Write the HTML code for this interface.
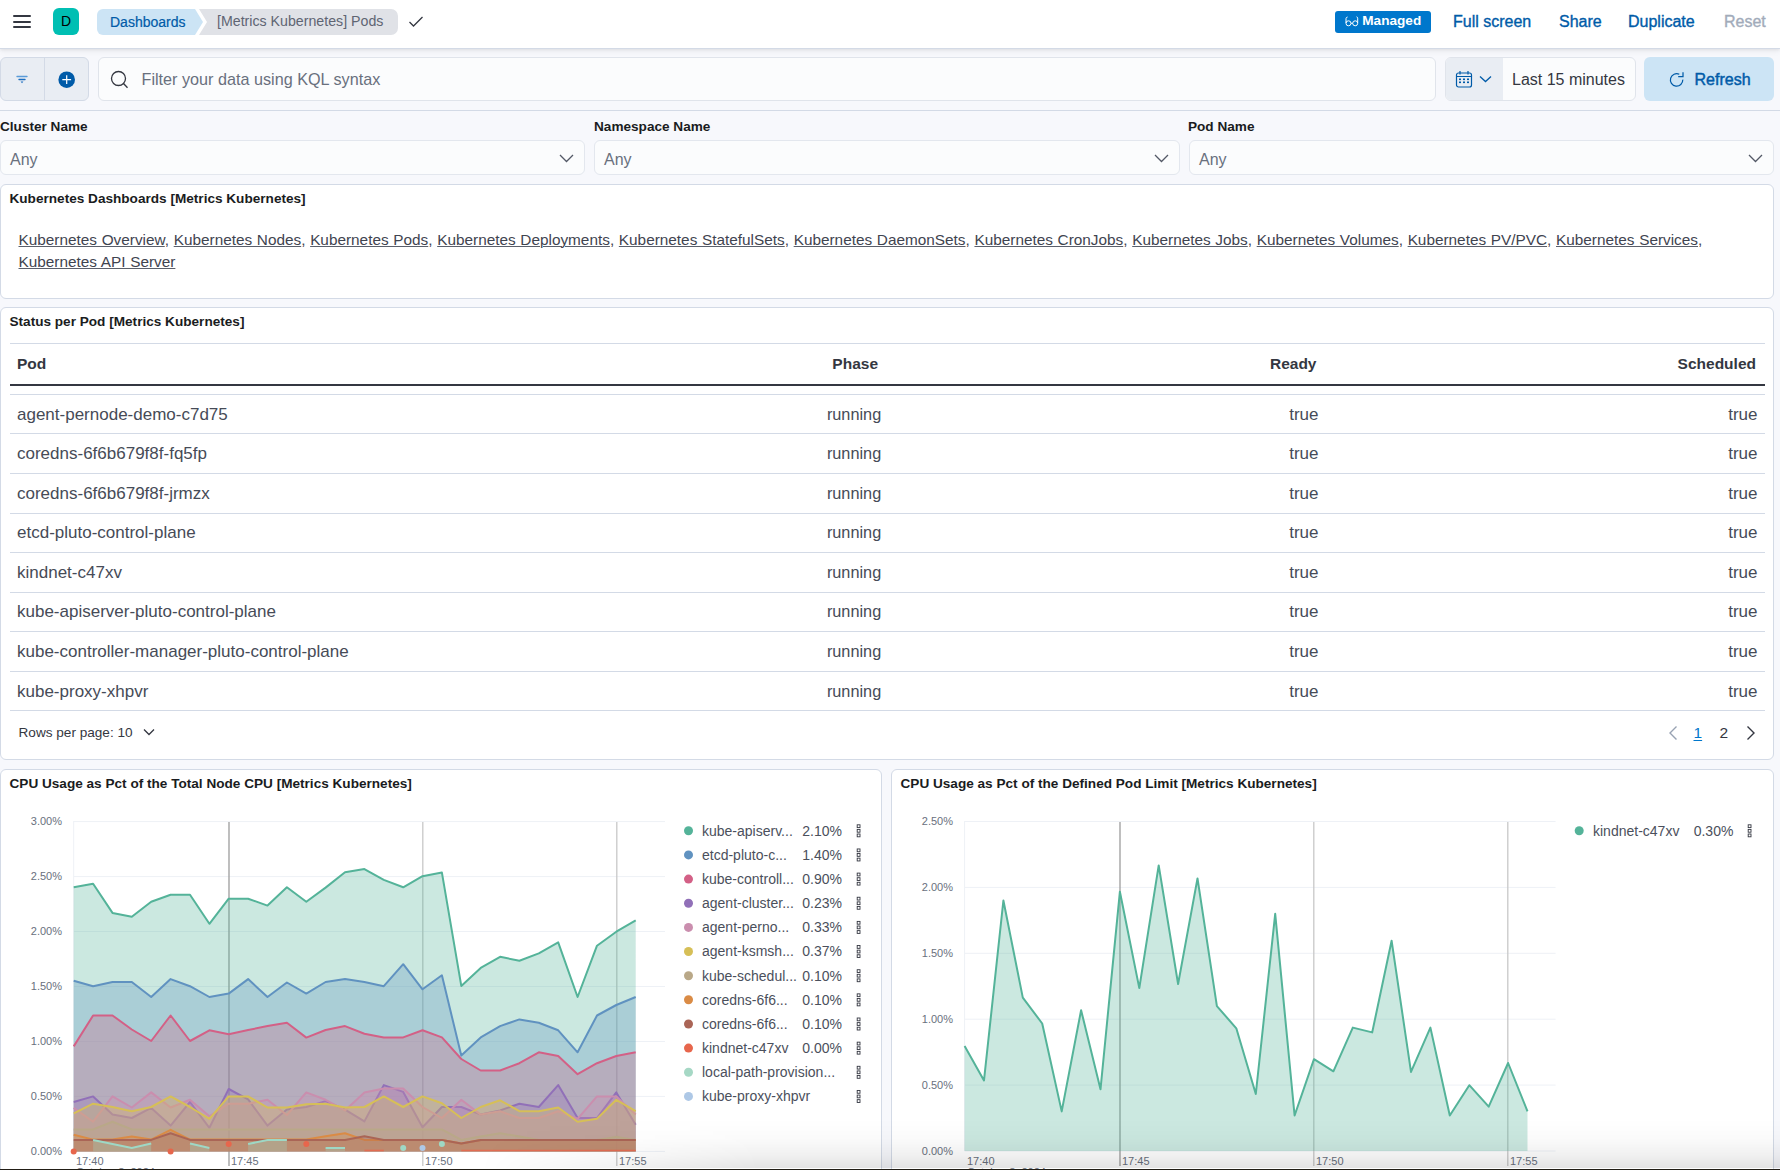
<!DOCTYPE html>
<html><head><meta charset="utf-8">
<style>
*{box-sizing:border-box;margin:0;padding:0}
html,body{width:1780px;height:1170px;overflow:hidden;background:#F7F8FC;font-family:"Liberation Sans",sans-serif;color:#343741}
.abs{position:absolute}
#hdr{position:absolute;left:0;top:0;width:1780px;height:49px;background:#fff;border-bottom:1px solid #D3DAE6;box-shadow:0 1px 3px rgba(0,0,0,.08),0 3px 6px rgba(0,0,0,.04)}
.bar{position:absolute;left:13px;width:18px;height:2.4px;border-radius:1.2px;background:#343741}
.t{position:absolute;white-space:nowrap;line-height:1}
.hlink{position:absolute;top:13.5px;font-size:16px;color:#005BA8;white-space:nowrap;line-height:1;-webkit-text-stroke:0.35px #005BA8}
.panel{position:absolute;background:#fff;border:1px solid #D3DAE6;border-radius:6px;overflow:hidden}
.ptitle{position:absolute;left:9.5px;font-size:13.6px;font-weight:700;color:#1A1C21;white-space:nowrap;line-height:1}
.sel{position:absolute;top:140px;height:35px;background:#FBFCFD;border:1px solid #E3E7EE;border-radius:6px}
.lbl{position:absolute;top:120px;font-size:13.6px;font-weight:700;color:#1A1C21;line-height:1;white-space:nowrap}
.any{position:absolute;left:9px;top:11px;font-size:16px;color:#69707D;line-height:1}
.chev{position:absolute;top:13px;right:10px}
.links{position:absolute;left:18.5px;top:228.6px;width:1740px;font-size:15.35px;line-height:22px;color:#3F4450;word-spacing:0.4px}
.links span{text-decoration:underline;text-decoration-thickness:1px;text-underline-offset:1px;text-decoration-color:#5A5F6B}
.row{position:absolute;left:10px;width:1755px;height:1px;background:#D3DAE6}
.cell{position:absolute;font-size:17px;color:#464B57;white-space:nowrap;line-height:1}
.hcell{position:absolute;top:356px;font-size:15.5px;font-weight:700;color:#343741;white-space:nowrap;line-height:1}
</style></head><body>

<!-- HEADER -->
<div id="hdr">
  <div class="bar" style="top:15px"></div>
  <div class="bar" style="top:20.6px"></div>
  <div class="bar" style="top:26.1px"></div>
  <div class="abs" style="left:53px;top:8px;width:26px;height:27px;border-radius:6px;background:#00BFB3;color:#000;font-size:14px;line-height:27px;text-align:center">D</div>
  <svg class="abs" style="left:97px;top:9px" width="302" height="26" viewBox="0 0 302 26">
    <path d="M6 0H98L106 13L98 26H6A6 6 0 0 1 0 20V6A6 6 0 0 1 6 0Z" fill="#CCE4F5"/>
    <path d="M102 0H294A7 7 0 0 1 301 7V19A7 7 0 0 1 294 26H102L110 13Z" fill="#E0E2E7"/>
  </svg>
  <div class="t" style="left:110px;top:14.5px;font-size:14px;color:#005BA8;-webkit-text-stroke:0.2px #005BA8">Dashboards</div>
  <div class="t" style="left:217px;top:14.2px;font-size:14.2px;color:#5F6573">[Metrics Kubernetes] Pods</div>
  <svg class="abs" style="left:408px;top:15px" width="16" height="13" viewBox="0 0 16 13"><path d="M1.5 7L5.5 11L14.5 2" fill="none" stroke="#343741" stroke-width="1.3"/></svg>

  <div class="abs" style="left:1335px;top:11px;width:96px;height:22px;border-radius:3px;background:#0077CC"></div>
  <svg class="abs" style="left:1344.5px;top:15.5px" width="14" height="11" viewBox="0 0 14 11"><g fill="none" stroke="#fff" stroke-width="1"><circle cx="3.5" cy="7.3" r="2.5"/><circle cx="10.2" cy="7.3" r="2.5"/><path d="M6 7.3H7.7M1 7V2.6Q1 1.3 2.6 1M12.7 7V2.2Q12.7 1.1 11.5 0.8"/></g></svg>
  <div class="t" style="left:1362.3px;top:14px;font-size:13.6px;font-weight:700;color:#fff">Managed</div>
  <div class="hlink" style="left:1453px">Full screen</div>
  <div class="hlink" style="left:1559px">Share</div>
  <div class="hlink" style="left:1628px">Duplicate</div>
  <div class="hlink" style="left:1724px;color:#A2ABBA;-webkit-text-stroke:0.35px #A2ABBA">Reset</div>
</div>

<!-- FILTER BAR -->
<div class="abs" style="left:0;top:57px;width:89px;height:44px;background:#E9EDF3;border:1px solid #D3DAE6;border-radius:6px"></div>
<div class="abs" style="left:44px;top:58px;width:1px;height:42px;background:#D3DAE6"></div>
<svg class="abs" style="left:15px;top:74px" width="14" height="12" viewBox="0 0 14 12"><g stroke-width="1.4" stroke-linecap="round"><path d="M2 2.5H12" stroke="#5A9BD8"/><path d="M4 5.5H10" stroke="#1B6DC0"/></g><path d="M5.6 7.6H8.4L7 9.2Z" fill="#1B6DC0"/></svg>
<svg class="abs" style="left:57.5px;top:70.5px" width="18" height="18" viewBox="0 0 18 18"><circle cx="8.7" cy="8.7" r="8.3" fill="#005BA8"/><path d="M8.7 4.3V13.1M4.3 8.7H13.1" stroke="#fff" stroke-width="1.2"/></svg>

<div class="abs" style="left:98px;top:57px;width:1338px;height:44px;background:#FBFCFD;border:1px solid #E0E4EB;border-radius:6px"></div>
<svg class="abs" style="left:110px;top:70px" width="20" height="20" viewBox="0 0 20 20"><g fill="none" stroke="#343741" stroke-width="1.3"><circle cx="8.5" cy="8.5" r="7"/><path d="M13.5 13.5L17.5 17.8"/></g></svg>
<div class="t" style="left:141.5px;top:71px;font-size:16.2px;color:#69707D">Filter your data using KQL syntax</div>

<div class="abs" style="left:1445px;top:57px;width:191px;height:44px;background:#FBFCFD;border:1px solid #E0E4EB;border-radius:6px;overflow:hidden"><div style="position:absolute;left:0;top:0;width:57px;height:44px;background:#E9EDF3"></div></div>
<svg class="abs" style="left:1455px;top:70px" width="18" height="18" viewBox="0 0 18 18"><g fill="none" stroke="#005BA8" stroke-width="1.2"><rect x="1.5" y="3" width="15" height="14" rx="2"/><path d="M1.5 6.5H16.5M5 1V4.5M13 1V4.5"/></g><g fill="#005BA8"><rect x="4" y="8.5" width="2" height="1.6"/><rect x="8" y="8.5" width="2" height="1.6"/><rect x="12" y="8.5" width="2" height="1.6"/><rect x="4" y="11.5" width="2" height="1.6"/><rect x="8" y="11.5" width="2" height="1.6"/><rect x="12" y="11.5" width="2" height="1.6"/></g></svg>
<svg class="abs" style="left:1479px;top:75px" width="13" height="8" viewBox="0 0 13 8"><path d="M1 1.5L6.5 6.5L12 1.5" fill="none" stroke="#005BA8" stroke-width="1.3"/></svg>
<div class="t" style="left:1512px;top:72px;font-size:16px;color:#343741">Last 15 minutes</div>

<div class="abs" style="left:1644px;top:57px;width:130px;height:44px;background:#CCE4F5;border-radius:6px"></div>
<svg class="abs" style="left:1668px;top:70px" width="18" height="18" viewBox="0 0 18 18"><g fill="none" stroke="#005BA8" stroke-width="1.25"><path d="M11.3 4.3A6.2 6.2 0 1 0 14.8 9.6"/><path d="M15 2.2V6.5H10.2"/></g></svg>
<div class="t" style="left:1694.5px;top:71.6px;font-size:16px;color:#005BA8;-webkit-text-stroke:0.45px #005BA8">Refresh</div>

<div class="abs" style="left:0;top:110px;width:1780px;height:1px;background:#D3DAE6"></div>

<!-- CONTROLS -->
<div class="lbl" style="left:0">Cluster Name</div>
<div class="lbl" style="left:594px">Namespace Name</div>
<div class="lbl" style="left:1188px">Pod Name</div>
<div class="sel" style="left:0;width:585px"><div class="any">Any</div><svg class="chev" width="15" height="9" viewBox="0 0 15 9"><path d="M1 1L7.5 7.5L14 1" fill="none" stroke="#535966" stroke-width="1.3"/></svg></div>
<div class="sel" style="left:594px;width:586px"><div class="any">Any</div><svg class="chev" width="15" height="9" viewBox="0 0 15 9"><path d="M1 1L7.5 7.5L14 1" fill="none" stroke="#535966" stroke-width="1.3"/></svg></div>
<div class="sel" style="left:1189px;width:585px"><div class="any">Any</div><svg class="chev" width="15" height="9" viewBox="0 0 15 9"><path d="M1 1L7.5 7.5L14 1" fill="none" stroke="#535966" stroke-width="1.3"/></svg></div>

<!-- PANEL 1 -->
<div class="panel" style="left:0;top:184px;width:1774px;height:115px"></div>
<div class="ptitle" style="top:191.5px">Kubernetes Dashboards [Metrics Kubernetes]</div>
<div class="links"><span>Kubernetes Overview</span>, <span>Kubernetes Nodes</span>, <span>Kubernetes Pods</span>, <span>Kubernetes Deployments</span>, <span>Kubernetes StatefulSets</span>, <span>Kubernetes DaemonSets</span>, <span>Kubernetes CronJobs</span>, <span>Kubernetes Jobs</span>, <span>Kubernetes Volumes</span>, <span>Kubernetes PV/PVC</span>, <span>Kubernetes Services</span>,<br><span>Kubernetes API Server</span></div>

<!-- PANEL 2 -->
<div class="panel" style="left:0;top:307px;width:1774px;height:453px"></div>
<div class="ptitle" style="top:314.7px">Status per Pod [Metrics Kubernetes]</div>
<div class="row" style="top:343px"></div>
<div class="hcell" style="left:17px">Pod</div>
<div class="hcell" style="right:902px">Phase</div>
<div class="hcell" style="right:463.5px">Ready</div>
<div class="hcell" style="right:24px">Scheduled</div>
<div class="abs" style="left:10px;top:384px;width:1755px;height:2px;background:#343741"></div>
<div class="row" style="top:394.1px"></div>
<div class="row" style="top:433.0px"></div>
<div class="row" style="top:473.1px"></div>
<div class="row" style="top:512.7px"></div>
<div class="row" style="top:551.8px"></div>
<div class="row" style="top:591.9px"></div>
<div class="row" style="top:630.8px"></div>
<div class="row" style="top:671.0px"></div>
<div class="row" style="top:709.9px"></div>
<div class="cell" style="left:17px;top:405.66px">agent-pernode-demo-c7d75</div>
<div class="cell" style="right:898.8px;font-size:16.3px;top:405.66px">running</div>
<div class="cell" style="right:461.5px;top:405.66px">true</div>
<div class="cell" style="right:22.5px;top:405.66px">true</div>
<div class="cell" style="left:17px;top:445.16px">coredns-6f6b679f8f-fq5fp</div>
<div class="cell" style="right:898.8px;font-size:16.3px;top:445.16px">running</div>
<div class="cell" style="right:461.5px;top:445.16px">true</div>
<div class="cell" style="right:22.5px;top:445.16px">true</div>
<div class="cell" style="left:17px;top:485.01px">coredns-6f6b679f8f-jrmzx</div>
<div class="cell" style="right:898.8px;font-size:16.3px;top:485.01px">running</div>
<div class="cell" style="right:461.5px;top:485.01px">true</div>
<div class="cell" style="right:22.5px;top:485.01px">true</div>
<div class="cell" style="left:17px;top:524.36px">etcd-pluto-control-plane</div>
<div class="cell" style="right:898.8px;font-size:16.3px;top:524.36px">running</div>
<div class="cell" style="right:461.5px;top:524.36px">true</div>
<div class="cell" style="right:22.5px;top:524.36px">true</div>
<div class="cell" style="left:17px;top:563.96px">kindnet-c47xv</div>
<div class="cell" style="right:898.8px;font-size:16.3px;top:563.96px">running</div>
<div class="cell" style="right:461.5px;top:563.96px">true</div>
<div class="cell" style="right:22.5px;top:563.96px">true</div>
<div class="cell" style="left:17px;top:603.46px">kube-apiserver-pluto-control-plane</div>
<div class="cell" style="right:898.8px;font-size:16.3px;top:603.46px">running</div>
<div class="cell" style="right:461.5px;top:603.46px">true</div>
<div class="cell" style="right:22.5px;top:603.46px">true</div>
<div class="cell" style="left:17px;top:643.01px">kube-controller-manager-pluto-control-plane</div>
<div class="cell" style="right:898.8px;font-size:16.3px;top:643.01px">running</div>
<div class="cell" style="right:461.5px;top:643.01px">true</div>
<div class="cell" style="right:22.5px;top:643.01px">true</div>
<div class="cell" style="left:17px;top:682.56px">kube-proxy-xhpvr</div>
<div class="cell" style="right:898.8px;font-size:16.3px;top:682.56px">running</div>
<div class="cell" style="right:461.5px;top:682.56px">true</div>
<div class="cell" style="right:22.5px;top:682.56px">true</div>
<div class="t" style="left:18.5px;top:725.7px;font-size:13.6px;color:#343741">Rows per page: 10</div>
<svg class="abs" style="left:143px;top:728px" width="12" height="8" viewBox="0 0 12 8"><path d="M1 1.5L6 6.5L11 1.5" fill="none" stroke="#343741" stroke-width="1.3"/></svg>
<svg class="abs" style="left:1667px;top:725px" width="12" height="16" viewBox="0 0 12 16"><path d="M9.5 1.5L3 8L9.5 14.5" fill="none" stroke="#98A2B3" stroke-width="1.4"/></svg>
<div class="t" style="left:1693.5px;top:725px;font-size:15.5px;color:#0077CC;text-decoration:underline;text-underline-offset:2px">1</div>
<div class="t" style="left:1719.5px;top:725px;font-size:15.5px;color:#343741">2</div>
<svg class="abs" style="left:1745px;top:725px" width="12" height="16" viewBox="0 0 12 16"><path d="M2.5 1.5L9 8L2.5 14.5" fill="none" stroke="#343741" stroke-width="1.4"/></svg>

<!-- PANEL 3 & 4 -->
<div class="panel" style="left:0;top:769px;width:882px;height:420px"></div>
<div class="ptitle" style="top:777px">CPU Usage as Pct of the Total Node CPU [Metrics Kubernetes]</div>
<div class="panel" style="left:891px;top:769px;width:883px;height:420px"></div>
<div class="ptitle" style="left:900.5px;top:777px">CPU Usage as Pct of the Defined Pod Limit [Metrics Kubernetes]</div>
<!--CHARTS-->
<svg class="abs" style="left:0;top:0" width="1780" height="1170" viewBox="0 0 1780 1170">
<line x1="73.7" y1="1151.4" x2="665" y2="1151.4" stroke="#EEF1F6" stroke-width="1"/>
<line x1="73.7" y1="1096.4" x2="665" y2="1096.4" stroke="#EEF1F6" stroke-width="1"/>
<line x1="73.7" y1="1041.5" x2="665" y2="1041.5" stroke="#EEF1F6" stroke-width="1"/>
<line x1="73.7" y1="986.5" x2="665" y2="986.5" stroke="#EEF1F6" stroke-width="1"/>
<line x1="73.7" y1="931.5" x2="665" y2="931.5" stroke="#EEF1F6" stroke-width="1"/>
<line x1="73.7" y1="876.6" x2="665" y2="876.6" stroke="#EEF1F6" stroke-width="1"/>
<line x1="73.7" y1="821.6" x2="665" y2="821.6" stroke="#EEF1F6" stroke-width="1"/>
<line x1="73.7" y1="821" x2="73.7" y2="1151.4" stroke="#EEF1F6" stroke-width="1"/>
<line x1="229" y1="822" x2="229" y2="1166" stroke="#9C9C9C" stroke-width="1.3"/>
<line x1="422.8" y1="822" x2="422.8" y2="1166" stroke="#C8C8C8" stroke-width="1.3"/>
<line x1="616.8" y1="822" x2="616.8" y2="1166" stroke="#C8C8C8" stroke-width="1.3"/>
<path d="M73.7 887.3 L93.1 883.7 L112.5 912.9 L131.8 916.7 L151.2 901.8 L170.6 894.8 L190.0 894.8 L209.4 923.8 L228.7 898.7 L248.1 898.7 L267.5 905.6 L286.9 887.3 L306.3 901.8 L325.6 887.6 L345.0 872.2 L364.4 869.1 L383.8 879.9 L403.2 887.3 L422.5 876.2 L441.9 872.6 L461.3 985.9 L480.7 967.9 L500.1 956.8 L519.4 960.8 L538.8 953.4 L558.2 942.3 L577.6 997.0 L597.0 945.7 L616.3 931.7 L635.7 920.4 L635.7 1151.4 L73.7 1151.4 Z" fill="#54B399" fill-opacity="0.3"/>
<path d="M73.7 887.3 L93.1 883.7 L112.5 912.9 L131.8 916.7 L151.2 901.8 L170.6 894.8 L190.0 894.8 L209.4 923.8 L228.7 898.7 L248.1 898.7 L267.5 905.6 L286.9 887.3 L306.3 901.8 L325.6 887.6 L345.0 872.2 L364.4 869.1 L383.8 879.9 L403.2 887.3 L422.5 876.2 L441.9 872.6 L461.3 985.9 L480.7 967.9 L500.1 956.8 L519.4 960.8 L538.8 953.4 L558.2 942.3 L577.6 997.0 L597.0 945.7 L616.3 931.7 L635.7 920.4" fill="none" stroke="#54B399" stroke-width="2" stroke-linejoin="round"/>
<path d="M73.7 980.8 L93.1 986.2 L112.5 982.0 L131.8 982.0 L151.2 997.0 L170.6 979.1 L190.0 986.2 L209.4 997.0 L228.7 993.6 L248.1 979.1 L267.5 997.0 L286.9 982.5 L306.3 993.6 L325.6 982.0 L345.0 979.1 L364.4 982.0 L383.8 986.2 L403.2 964.2 L422.5 989.3 L441.9 975.3 L461.3 1055.6 L480.7 1037.4 L500.1 1026.1 L519.4 1019.4 L538.8 1022.8 L558.2 1030.3 L577.6 1052.3 L597.0 1015.5 L616.3 1005.0 L635.7 997.0 L635.7 1151.4 L73.7 1151.4 Z" fill="#6092C0" fill-opacity="0.3"/>
<path d="M73.7 980.8 L93.1 986.2 L112.5 982.0 L131.8 982.0 L151.2 997.0 L170.6 979.1 L190.0 986.2 L209.4 997.0 L228.7 993.6 L248.1 979.1 L267.5 997.0 L286.9 982.5 L306.3 993.6 L325.6 982.0 L345.0 979.1 L364.4 982.0 L383.8 986.2 L403.2 964.2 L422.5 989.3 L441.9 975.3 L461.3 1055.6 L480.7 1037.4 L500.1 1026.1 L519.4 1019.4 L538.8 1022.8 L558.2 1030.3 L577.6 1052.3 L597.0 1015.5 L616.3 1005.0 L635.7 997.0" fill="none" stroke="#6092C0" stroke-width="2" stroke-linejoin="round"/>
<path d="M73.7 1046.4 L93.1 1015.5 L112.5 1015.5 L131.8 1029.5 L151.2 1041.0 L170.6 1015.5 L190.0 1041.0 L209.4 1030.3 L228.7 1034.2 L248.1 1030.0 L267.5 1026.1 L286.9 1022.8 L306.3 1037.6 L325.6 1030.0 L345.0 1026.1 L364.4 1033.7 L383.8 1037.4 L403.2 1037.4 L422.5 1030.3 L441.9 1037.4 L461.3 1059.0 L480.7 1070.5 L500.1 1070.5 L519.4 1063.2 L538.8 1052.3 L558.2 1056.0 L577.6 1074.2 L597.0 1063.2 L616.3 1056.0 L635.7 1052.3 L635.7 1151.4 L73.7 1151.4 Z" fill="#D36086" fill-opacity="0.3"/>
<path d="M73.7 1046.4 L93.1 1015.5 L112.5 1015.5 L131.8 1029.5 L151.2 1041.0 L170.6 1015.5 L190.0 1041.0 L209.4 1030.3 L228.7 1034.2 L248.1 1030.0 L267.5 1026.1 L286.9 1022.8 L306.3 1037.6 L325.6 1030.0 L345.0 1026.1 L364.4 1033.7 L383.8 1037.4 L403.2 1037.4 L422.5 1030.3 L441.9 1037.4 L461.3 1059.0 L480.7 1070.5 L500.1 1070.5 L519.4 1063.2 L538.8 1052.3 L558.2 1056.0 L577.6 1074.2 L597.0 1063.2 L616.3 1056.0 L635.7 1052.3" fill="none" stroke="#D36086" stroke-width="2" stroke-linejoin="round"/>
<path d="M73.7 1102.0 L93.1 1096.4 L112.5 1114.6 L131.8 1118.0 L151.2 1107.9 L170.6 1125.6 L190.0 1102.0 L209.4 1127.8 L228.7 1089.0 L248.1 1099.4 L267.5 1125.6 L286.9 1109.6 L306.3 1107.0 L325.6 1101.1 L345.0 1109.6 L364.4 1121.4 L383.8 1085.1 L403.2 1091.9 L422.5 1127.3 L441.9 1107.0 L461.3 1107.0 L480.7 1114.6 L500.1 1110.4 L519.4 1103.7 L538.8 1107.0 L558.2 1085.1 L577.6 1118.0 L597.0 1118.0 L616.3 1092.4 L635.7 1124.7 L635.7 1151.4 L73.7 1151.4 Z" fill="#9170B8" fill-opacity="0.3"/>
<path d="M73.7 1102.0 L93.1 1096.4 L112.5 1114.6 L131.8 1118.0 L151.2 1107.9 L170.6 1125.6 L190.0 1102.0 L209.4 1127.8 L228.7 1089.0 L248.1 1099.4 L267.5 1125.6 L286.9 1109.6 L306.3 1107.0 L325.6 1101.1 L345.0 1109.6 L364.4 1121.4 L383.8 1085.1 L403.2 1091.9 L422.5 1127.3 L441.9 1107.0 L461.3 1107.0 L480.7 1114.6 L500.1 1110.4 L519.4 1103.7 L538.8 1107.0 L558.2 1085.1 L577.6 1118.0 L597.0 1118.0 L616.3 1092.4 L635.7 1124.7" fill="none" stroke="#9170B8" stroke-width="2" stroke-linejoin="round"/>
<path d="M73.7 1107.9 L93.1 1121.7 L112.5 1096.4 L131.8 1107.5 L151.2 1092.4 L170.6 1107.5 L190.0 1099.8 L209.4 1116.3 L228.7 1103.7 L248.1 1103.7 L267.5 1099.8 L286.9 1115.0 L306.3 1092.4 L325.6 1099.8 L345.0 1110.4 L364.4 1092.4 L383.8 1088.5 L403.2 1088.5 L422.5 1107.0 L441.9 1118.0 L461.3 1099.8 L480.7 1114.6 L500.1 1111.2 L519.4 1118.0 L538.8 1118.0 L558.2 1111.2 L577.6 1118.8 L597.0 1096.4 L616.3 1096.4 L635.7 1114.6 L635.7 1151.4 L73.7 1151.4 Z" fill="#CA8EAE" fill-opacity="0.3"/>
<path d="M73.7 1107.9 L93.1 1121.7 L112.5 1096.4 L131.8 1107.5 L151.2 1092.4 L170.6 1107.5 L190.0 1099.8 L209.4 1116.3 L228.7 1103.7 L248.1 1103.7 L267.5 1099.8 L286.9 1115.0 L306.3 1092.4 L325.6 1099.8 L345.0 1110.4 L364.4 1092.4 L383.8 1088.5 L403.2 1088.5 L422.5 1107.0 L441.9 1118.0 L461.3 1099.8 L480.7 1114.6 L500.1 1111.2 L519.4 1118.0 L538.8 1118.0 L558.2 1111.2 L577.6 1118.8 L597.0 1096.4 L616.3 1096.4 L635.7 1114.6" fill="none" stroke="#CA8EAE" stroke-width="2" stroke-linejoin="round"/>
<path d="M73.7 1113.3 L93.1 1103.7 L112.5 1107.0 L131.8 1111.2 L151.2 1107.0 L170.6 1096.4 L190.0 1107.0 L209.4 1118.8 L228.7 1096.4 L248.1 1096.4 L267.5 1107.5 L286.9 1107.5 L306.3 1104.2 L325.6 1103.7 L345.0 1107.5 L364.4 1107.0 L383.8 1096.4 L403.2 1107.0 L422.5 1096.4 L441.9 1103.2 L461.3 1118.0 L480.7 1107.0 L500.1 1100.3 L519.4 1111.2 L538.8 1111.2 L558.2 1107.5 L577.6 1121.7 L597.0 1118.8 L616.3 1099.8 L635.7 1111.2 L635.7 1151.4 L73.7 1151.4 Z" fill="#D6BF57" fill-opacity="0.3"/>
<path d="M73.7 1113.3 L93.1 1103.7 L112.5 1107.0 L131.8 1111.2 L151.2 1107.0 L170.6 1096.4 L190.0 1107.0 L209.4 1118.8 L228.7 1096.4 L248.1 1096.4 L267.5 1107.5 L286.9 1107.5 L306.3 1104.2 L325.6 1103.7 L345.0 1107.5 L364.4 1107.0 L383.8 1096.4 L403.2 1107.0 L422.5 1096.4 L441.9 1103.2 L461.3 1118.0 L480.7 1107.0 L500.1 1100.3 L519.4 1111.2 L538.8 1111.2 L558.2 1107.5 L577.6 1121.7 L597.0 1118.8 L616.3 1099.8 L635.7 1111.2" fill="none" stroke="#D6BF57" stroke-width="2" stroke-linejoin="round"/>
<path d="M73.7 1129.4 L93.1 1129.4 L112.5 1121.7 L131.8 1129.4 L151.2 1129.4 L170.6 1129.4 L190.0 1129.4 L209.4 1129.4 L228.7 1129.4 L248.1 1129.4 L267.5 1129.4 L286.9 1129.4 L306.3 1129.4 L325.6 1129.4 L345.0 1129.4 L364.4 1129.4 L383.8 1129.4 L403.2 1129.4 L422.5 1129.4 L441.9 1129.4 L461.3 1139.9 L480.7 1136.5 L500.1 1133.2 L519.4 1136.5 L538.8 1139.9 L558.2 1139.9 L577.6 1139.9 L597.0 1139.9 L616.3 1136.9 L635.7 1139.9 L635.7 1151.4 L73.7 1151.4 Z" fill="#B9A888" fill-opacity="0.3"/>
<path d="M73.7 1129.4 L93.1 1129.4 L112.5 1121.7 L131.8 1129.4 L151.2 1129.4 L170.6 1129.4 L190.0 1129.4 L209.4 1129.4 L228.7 1129.4 L248.1 1129.4 L267.5 1129.4 L286.9 1129.4 L306.3 1129.4 L325.6 1129.4 L345.0 1129.4 L364.4 1129.4 L383.8 1129.4 L403.2 1129.4 L422.5 1129.4 L441.9 1129.4 L461.3 1139.9 L480.7 1136.5 L500.1 1133.2 L519.4 1136.5 L538.8 1139.9 L558.2 1139.9 L577.6 1139.9 L597.0 1139.9 L616.3 1136.9 L635.7 1139.9" fill="none" stroke="#B9A888" stroke-width="2" stroke-linejoin="round"/>
<path d="M73.7 1134.8 L93.1 1139.6 L112.5 1139.6 L131.8 1136.5 L151.2 1139.6 L170.6 1129.8 L190.0 1139.6 L209.4 1139.6 L228.7 1139.6 L248.1 1139.6 L267.5 1139.6 L286.9 1139.6 L306.3 1139.6 L325.6 1136.2 L345.0 1133.2 L364.4 1139.9 L383.8 1139.9 L403.2 1139.9 L422.5 1139.9 L441.9 1139.9 L461.3 1143.6 L480.7 1139.9 L500.1 1139.9 L519.4 1139.9 L538.8 1139.9 L558.2 1139.9 L577.6 1139.9 L597.0 1139.9 L616.3 1139.9 L635.7 1139.9 L635.7 1151.4 L73.7 1151.4 Z" fill="#DA8B45" fill-opacity="0.3"/>
<path d="M73.7 1134.8 L93.1 1139.6 L112.5 1139.6 L131.8 1136.5 L151.2 1139.6 L170.6 1129.8 L190.0 1139.6 L209.4 1139.6 L228.7 1139.6 L248.1 1139.6 L267.5 1139.6 L286.9 1139.6 L306.3 1139.6 L325.6 1136.2 L345.0 1133.2 L364.4 1139.9 L383.8 1139.9 L403.2 1139.9 L422.5 1139.9 L441.9 1139.9 L461.3 1143.6 L480.7 1139.9 L500.1 1139.9 L519.4 1139.9 L538.8 1139.9 L558.2 1139.9 L577.6 1139.9 L597.0 1139.9 L616.3 1139.9 L635.7 1139.9" fill="none" stroke="#DA8B45" stroke-width="2" stroke-linejoin="round"/>
<path d="M73.7 1139.9 L93.1 1139.9 L112.5 1139.9 L131.8 1139.9 L151.2 1139.9 L170.6 1133.2 L190.0 1139.9 L209.4 1139.9 L228.7 1139.9 L248.1 1139.9 L267.5 1139.9 L286.9 1139.9 L306.3 1139.9 L325.6 1139.9 L345.0 1139.9 L364.4 1136.2 L383.8 1139.9 L403.2 1139.9 L422.5 1139.9 L441.9 1139.9 L461.3 1143.6 L480.7 1139.9 L500.1 1139.9 L519.4 1139.9 L538.8 1139.9 L558.2 1139.9 L577.6 1139.9 L597.0 1139.9 L616.3 1139.9 L635.7 1139.9 L635.7 1151.4 L73.7 1151.4 Z" fill="#AA6556" fill-opacity="0.3"/>
<path d="M73.7 1139.9 L93.1 1139.9 L112.5 1139.9 L131.8 1139.9 L151.2 1139.9 L170.6 1133.2 L190.0 1139.9 L209.4 1139.9 L228.7 1139.9 L248.1 1139.9 L267.5 1139.9 L286.9 1139.9 L306.3 1139.9 L325.6 1139.9 L345.0 1139.9 L364.4 1136.2 L383.8 1139.9 L403.2 1139.9 L422.5 1139.9 L441.9 1139.9 L461.3 1143.6 L480.7 1139.9 L500.1 1139.9 L519.4 1139.9 L538.8 1139.9 L558.2 1139.9 L577.6 1139.9 L597.0 1139.9 L616.3 1139.9 L635.7 1139.9" fill="none" stroke="#AA6556" stroke-width="2" stroke-linejoin="round"/>
<path d="M93.1 1139.9 L112.5 1144.1 L131.8 1148.0 L151.2 1143.6 L151.2 1151.4 L93.1 1151.4 Z" fill="#9ED8C5" fill-opacity="0.3"/>
<path d="M190.0 1143.6 L209.4 1148.0 L209.4 1151.4 L190.0 1151.4 Z" fill="#9ED8C5" fill-opacity="0.3"/>
<path d="M248.1 1144.1 L267.5 1139.9 L286.9 1139.9 L286.9 1151.4 L248.1 1151.4 Z" fill="#9ED8C5" fill-opacity="0.3"/>
<path d="M325.6 1148.0 L345.0 1148.0 L345.0 1151.4 L325.6 1151.4 Z" fill="#9ED8C5" fill-opacity="0.3"/>
<path d="M93.1 1139.9 L112.5 1144.1 L131.8 1148.0 L151.2 1143.6" fill="none" stroke="#9ED8C5" stroke-width="2"/>
<path d="M190.0 1143.6 L209.4 1148.0" fill="none" stroke="#9ED8C5" stroke-width="2"/>
<path d="M248.1 1144.1 L267.5 1139.9 L286.9 1139.9" fill="none" stroke="#9ED8C5" stroke-width="2"/>
<path d="M325.6 1148.0 L345.0 1148.0" fill="none" stroke="#9ED8C5" stroke-width="2"/>
<circle cx="403.2" cy="1148.0" r="3" fill="#9ED8C5"/>
<circle cx="441.9" cy="1144.1" r="3" fill="#9ED8C5"/>
<circle cx="422.5" cy="1148.0" r="3" fill="#AEC8E6"/>
<circle cx="73.7" cy="1151.4" r="3" fill="#E7664C"/>
<circle cx="170.6" cy="1151.4" r="3" fill="#E7664C"/>
<circle cx="228.7" cy="1144.1" r="3" fill="#E7664C"/>
<circle cx="306.3" cy="1144.1" r="3" fill="#E7664C"/>
<path d="M364.4 1150.5 L383.8 1150.5" stroke="#E7664C" stroke-width="1.6" stroke-opacity="0.85"/>
<path d="M461.3 1150.5 L635.7 1150.5" stroke="#E7664C" stroke-width="1.6" stroke-opacity="0.85"/>
<text x="62" y="1155.2" text-anchor="end" font-size="11" fill="#69707D">0.00%</text>
<text x="62" y="1100.2" text-anchor="end" font-size="11" fill="#69707D">0.50%</text>
<text x="62" y="1045.3" text-anchor="end" font-size="11" fill="#69707D">1.00%</text>
<text x="62" y="990.3" text-anchor="end" font-size="11" fill="#69707D">1.50%</text>
<text x="62" y="935.3" text-anchor="end" font-size="11" fill="#69707D">2.00%</text>
<text x="62" y="880.4" text-anchor="end" font-size="11" fill="#69707D">2.50%</text>
<text x="62" y="825.4" text-anchor="end" font-size="11" fill="#69707D">3.00%</text>
<text x="76" y="1164.8" font-size="11" fill="#69707D">17:40</text>
<text x="231" y="1164.8" font-size="11" fill="#69707D">17:45</text>
<text x="425" y="1164.8" font-size="11" fill="#69707D">17:50</text>
<text x="619" y="1164.8" font-size="11" fill="#69707D">17:55</text>
<text x="76" y="1176" font-size="11" fill="#69707D">October 8, 2024</text>
<line x1="964.6" y1="1151.0" x2="1555.6" y2="1151.0" stroke="#EEF1F6" stroke-width="1"/>
<line x1="964.6" y1="1085.1" x2="1555.6" y2="1085.1" stroke="#EEF1F6" stroke-width="1"/>
<line x1="964.6" y1="1019.2" x2="1555.6" y2="1019.2" stroke="#EEF1F6" stroke-width="1"/>
<line x1="964.6" y1="953.3" x2="1555.6" y2="953.3" stroke="#EEF1F6" stroke-width="1"/>
<line x1="964.6" y1="887.4" x2="1555.6" y2="887.4" stroke="#EEF1F6" stroke-width="1"/>
<line x1="964.6" y1="821.5" x2="1555.6" y2="821.5" stroke="#EEF1F6" stroke-width="1"/>
<line x1="964.6" y1="821" x2="964.6" y2="1151" stroke="#EEF1F6" stroke-width="1"/>
<line x1="1120" y1="822" x2="1120" y2="1166" stroke="#9C9C9C" stroke-width="1.3"/>
<line x1="1313.8" y1="822" x2="1313.8" y2="1166" stroke="#C8C8C8" stroke-width="1.3"/>
<line x1="1507.8" y1="822" x2="1507.8" y2="1166" stroke="#C8C8C8" stroke-width="1.3"/>
<path d="M964.6 1046.0 L984.0 1080.4 L1003.4 900.5 L1022.8 997.6 L1042.2 1023.5 L1061.7 1111.4 L1081.1 1010.2 L1100.5 1089.3 L1119.9 891.7 L1139.3 988.1 L1158.7 865.4 L1178.1 984.0 L1197.5 878.4 L1216.9 1006.1 L1236.3 1028.3 L1255.8 1094.0 L1275.2 913.8 L1294.6 1115.5 L1314.0 1059.2 L1333.4 1071.3 L1352.8 1027.6 L1372.2 1032.4 L1391.6 940.7 L1411.0 1071.9 L1430.4 1027.6 L1449.8 1115.5 L1469.3 1085.2 L1488.7 1106.7 L1508.1 1063.0 L1527.5 1111.4 L1527.5 1151.0 L964.6 1151.0 Z" fill="#54B399" fill-opacity="0.3"/>
<path d="M964.6 1046.0 L984.0 1080.4 L1003.4 900.5 L1022.8 997.6 L1042.2 1023.5 L1061.7 1111.4 L1081.1 1010.2 L1100.5 1089.3 L1119.9 891.7 L1139.3 988.1 L1158.7 865.4 L1178.1 984.0 L1197.5 878.4 L1216.9 1006.1 L1236.3 1028.3 L1255.8 1094.0 L1275.2 913.8 L1294.6 1115.5 L1314.0 1059.2 L1333.4 1071.3 L1352.8 1027.6 L1372.2 1032.4 L1391.6 940.7 L1411.0 1071.9 L1430.4 1027.6 L1449.8 1115.5 L1469.3 1085.2 L1488.7 1106.7 L1508.1 1063.0 L1527.5 1111.4" fill="none" stroke="#54B399" stroke-width="2" stroke-linejoin="round"/>
<text x="953" y="1154.8" text-anchor="end" font-size="11" fill="#69707D">0.00%</text>
<text x="953" y="1088.9" text-anchor="end" font-size="11" fill="#69707D">0.50%</text>
<text x="953" y="1023.0" text-anchor="end" font-size="11" fill="#69707D">1.00%</text>
<text x="953" y="957.1" text-anchor="end" font-size="11" fill="#69707D">1.50%</text>
<text x="953" y="891.2" text-anchor="end" font-size="11" fill="#69707D">2.00%</text>
<text x="953" y="825.3" text-anchor="end" font-size="11" fill="#69707D">2.50%</text>
<text x="967" y="1164.8" font-size="11" fill="#69707D">17:40</text>
<text x="1122" y="1164.8" font-size="11" fill="#69707D">17:45</text>
<text x="1316" y="1164.8" font-size="11" fill="#69707D">17:50</text>
<text x="1510" y="1164.8" font-size="11" fill="#69707D">17:55</text>
<text x="967" y="1176" font-size="11" fill="#69707D">October 8, 2024</text>
<circle cx="688.5" cy="830.8" r="4.5" fill="#54B399"/>
<text x="702" y="835.6" font-size="14" fill="#4B505C">kube-apiserv...</text>
<text x="842" y="835.6" text-anchor="end" font-size="14" fill="#4B505C">2.10%</text>
<rect x="857.2" y="824.8" width="2.8" height="2.8" fill="none" stroke="#343741" stroke-width="0.9"/><rect x="857.2" y="829.4" width="2.8" height="2.8" fill="none" stroke="#343741" stroke-width="0.9"/><rect x="857.2" y="834.0" width="2.8" height="2.8" fill="none" stroke="#343741" stroke-width="0.9"/>
<circle cx="688.5" cy="854.9" r="4.5" fill="#6092C0"/>
<text x="702" y="859.7" font-size="14" fill="#4B505C">etcd-pluto-c...</text>
<text x="842" y="859.7" text-anchor="end" font-size="14" fill="#4B505C">1.40%</text>
<rect x="857.2" y="848.9499999999999" width="2.8" height="2.8" fill="none" stroke="#343741" stroke-width="0.9"/><rect x="857.2" y="853.55" width="2.8" height="2.8" fill="none" stroke="#343741" stroke-width="0.9"/><rect x="857.2" y="858.15" width="2.8" height="2.8" fill="none" stroke="#343741" stroke-width="0.9"/>
<circle cx="688.5" cy="879.1" r="4.5" fill="#D36086"/>
<text x="702" y="883.9" font-size="14" fill="#4B505C">kube-controll...</text>
<text x="842" y="883.9" text-anchor="end" font-size="14" fill="#4B505C">0.90%</text>
<rect x="857.2" y="873.0999999999999" width="2.8" height="2.8" fill="none" stroke="#343741" stroke-width="0.9"/><rect x="857.2" y="877.6999999999999" width="2.8" height="2.8" fill="none" stroke="#343741" stroke-width="0.9"/><rect x="857.2" y="882.3" width="2.8" height="2.8" fill="none" stroke="#343741" stroke-width="0.9"/>
<circle cx="688.5" cy="903.2" r="4.5" fill="#9170B8"/>
<text x="702" y="908.0" font-size="14" fill="#4B505C">agent-cluster...</text>
<text x="842" y="908.0" text-anchor="end" font-size="14" fill="#4B505C">0.23%</text>
<rect x="857.2" y="897.25" width="2.8" height="2.8" fill="none" stroke="#343741" stroke-width="0.9"/><rect x="857.2" y="901.85" width="2.8" height="2.8" fill="none" stroke="#343741" stroke-width="0.9"/><rect x="857.2" y="906.45" width="2.8" height="2.8" fill="none" stroke="#343741" stroke-width="0.9"/>
<circle cx="688.5" cy="927.4" r="4.5" fill="#CA8EAE"/>
<text x="702" y="932.2" font-size="14" fill="#4B505C">agent-perno...</text>
<text x="842" y="932.2" text-anchor="end" font-size="14" fill="#4B505C">0.33%</text>
<rect x="857.2" y="921.4" width="2.8" height="2.8" fill="none" stroke="#343741" stroke-width="0.9"/><rect x="857.2" y="926.0" width="2.8" height="2.8" fill="none" stroke="#343741" stroke-width="0.9"/><rect x="857.2" y="930.6" width="2.8" height="2.8" fill="none" stroke="#343741" stroke-width="0.9"/>
<circle cx="688.5" cy="951.5" r="4.5" fill="#D6BF57"/>
<text x="702" y="956.3" font-size="14" fill="#4B505C">agent-ksmsh...</text>
<text x="842" y="956.3" text-anchor="end" font-size="14" fill="#4B505C">0.37%</text>
<rect x="857.2" y="945.55" width="2.8" height="2.8" fill="none" stroke="#343741" stroke-width="0.9"/><rect x="857.2" y="950.15" width="2.8" height="2.8" fill="none" stroke="#343741" stroke-width="0.9"/><rect x="857.2" y="954.75" width="2.8" height="2.8" fill="none" stroke="#343741" stroke-width="0.9"/>
<circle cx="688.5" cy="975.7" r="4.5" fill="#B9A888"/>
<text x="702" y="980.5" font-size="14" fill="#4B505C">kube-schedul...</text>
<text x="842" y="980.5" text-anchor="end" font-size="14" fill="#4B505C">0.10%</text>
<rect x="857.2" y="969.6999999999999" width="2.8" height="2.8" fill="none" stroke="#343741" stroke-width="0.9"/><rect x="857.2" y="974.3" width="2.8" height="2.8" fill="none" stroke="#343741" stroke-width="0.9"/><rect x="857.2" y="978.9" width="2.8" height="2.8" fill="none" stroke="#343741" stroke-width="0.9"/>
<circle cx="688.5" cy="999.8" r="4.5" fill="#DA8B45"/>
<text x="702" y="1004.6" font-size="14" fill="#4B505C">coredns-6f6...</text>
<text x="842" y="1004.6" text-anchor="end" font-size="14" fill="#4B505C">0.10%</text>
<rect x="857.2" y="993.8499999999999" width="2.8" height="2.8" fill="none" stroke="#343741" stroke-width="0.9"/><rect x="857.2" y="998.4499999999999" width="2.8" height="2.8" fill="none" stroke="#343741" stroke-width="0.9"/><rect x="857.2" y="1003.05" width="2.8" height="2.8" fill="none" stroke="#343741" stroke-width="0.9"/>
<circle cx="688.5" cy="1024.0" r="4.5" fill="#AA6556"/>
<text x="702" y="1028.8" font-size="14" fill="#4B505C">coredns-6f6...</text>
<text x="842" y="1028.8" text-anchor="end" font-size="14" fill="#4B505C">0.10%</text>
<rect x="857.2" y="1018.0" width="2.8" height="2.8" fill="none" stroke="#343741" stroke-width="0.9"/><rect x="857.2" y="1022.6" width="2.8" height="2.8" fill="none" stroke="#343741" stroke-width="0.9"/><rect x="857.2" y="1027.1999999999998" width="2.8" height="2.8" fill="none" stroke="#343741" stroke-width="0.9"/>
<circle cx="688.5" cy="1048.1" r="4.5" fill="#E7664C"/>
<text x="702" y="1052.9" font-size="14" fill="#4B505C">kindnet-c47xv</text>
<text x="842" y="1052.9" text-anchor="end" font-size="14" fill="#4B505C">0.00%</text>
<rect x="857.2" y="1042.1499999999999" width="2.8" height="2.8" fill="none" stroke="#343741" stroke-width="0.9"/><rect x="857.2" y="1046.7499999999998" width="2.8" height="2.8" fill="none" stroke="#343741" stroke-width="0.9"/><rect x="857.2" y="1051.3499999999997" width="2.8" height="2.8" fill="none" stroke="#343741" stroke-width="0.9"/>
<circle cx="688.5" cy="1072.3" r="4.5" fill="#A6D8C5"/>
<text x="702" y="1077.1" font-size="14" fill="#4B505C">local-path-provision...</text>
<rect x="857.2" y="1066.3" width="2.8" height="2.8" fill="none" stroke="#343741" stroke-width="0.9"/><rect x="857.2" y="1070.8999999999999" width="2.8" height="2.8" fill="none" stroke="#343741" stroke-width="0.9"/><rect x="857.2" y="1075.4999999999998" width="2.8" height="2.8" fill="none" stroke="#343741" stroke-width="0.9"/>
<circle cx="688.5" cy="1096.4" r="4.5" fill="#AEC8E6"/>
<text x="702" y="1101.2" font-size="14" fill="#4B505C">kube-proxy-xhpvr</text>
<rect x="857.2" y="1090.4499999999998" width="2.8" height="2.8" fill="none" stroke="#343741" stroke-width="0.9"/><rect x="857.2" y="1095.0499999999997" width="2.8" height="2.8" fill="none" stroke="#343741" stroke-width="0.9"/><rect x="857.2" y="1099.6499999999996" width="2.8" height="2.8" fill="none" stroke="#343741" stroke-width="0.9"/>
<circle cx="1579.2" cy="830.8" r="4.5" fill="#54B399"/>
<text x="1593" y="835.6" font-size="14" fill="#4B505C">kindnet-c47xv</text>
<text x="1733.4" y="835.6" text-anchor="end" font-size="14" fill="#4B505C">0.30%</text>
<rect x="1748.1999999999998" y="824.8" width="2.8" height="2.8" fill="none" stroke="#343741" stroke-width="0.9"/><rect x="1748.1999999999998" y="829.4" width="2.8" height="2.8" fill="none" stroke="#343741" stroke-width="0.9"/><rect x="1748.1999999999998" y="834.0" width="2.8" height="2.8" fill="none" stroke="#343741" stroke-width="0.9"/>
</svg>
<!--/CHARTS-->

<div class="abs" style="left:0;top:1118px;width:1780px;height:50px;background:linear-gradient(rgba(0,0,0,0),rgba(0,0,0,.015) 40%,rgba(0,0,0,.06) 75%,rgba(0,0,0,.11));-webkit-mask-image:linear-gradient(to right,transparent 480px,#000 760px);mask-image:linear-gradient(to right,transparent 480px,#000 760px)"></div>
<div class="abs" style="left:0;top:1168.6px;width:1780px;height:1.4px;background:#221e16"></div>
</body></html>
